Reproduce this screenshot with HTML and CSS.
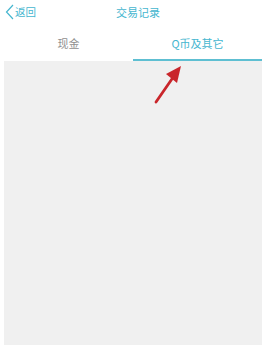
FILE: index.html
```html
<!DOCTYPE html>
<html>
<head>
<meta charset="utf-8">
<link rel="stylesheet" href="styles.css">
</head>
<body>
<div class="page">
  <header class="topbar">
    <a class="back">
      <svg class="chev" width="9" height="16" viewBox="0 0 9 16"><path d="M8 1 L1.5 8 L8 15" fill="none" stroke="#45b6cf" stroke-width="1.2"/></svg>
      <span>返回</span>
    </a>
    <div class="title">交易记录</div>
  </header>
  <nav class="tabs">
    <div class="tab">现金</div>
    <div class="tab active">Q币及其它</div>
  </nav>
  <main class="content"></main>
  <svg class="arrow" width="40" height="44" viewBox="0 0 40 44">
    <path d="M6 40 L24 14" stroke="#c9262b" stroke-width="2.8" stroke-linecap="round" fill="none"/>
    <path d="M31 4 L16 12 L27 21 Z" fill="#c9262b"/>
  </svg>
</div>
</body>
</html>
```
FILE: styles.css
```css
html, body {
  margin: 0;
  padding: 0;
  background: #ffffff;
}
.page {
  position: relative;
  width: 266px;
  height: 346px;
  display: flex;
  flex-direction: column;
  font-family: "Noto Sans CJK SC", "Noto Sans", sans-serif;
  overflow: hidden;
}
.topbar {
  position: relative;
  height: 26px;
  display: flex;
  align-items: center;
  justify-content: center;
}
.back {
  position: absolute;
  left: 5px;
  top: 4px;
  display: flex;
  align-items: center;
  gap: 1px;
  color: #45b6cf;
  font-size: 10.5px;
  line-height: 16px;
}
.title {
  color: #45b6cf;
  font-size: 11px;
  line-height: 14px;
  margin-top: -2px;
  margin-left: 10px;
}
.tabs {
  display: flex;
  height: 35px;
  padding: 0 4px;
}
.tab {
  flex: 1;
  display: flex;
  align-items: center;
  justify-content: center;
  font-size: 11px;
  color: #909090;
  box-sizing: border-box;
  padding-bottom: 2px;
}
.tab.active {
  color: #45b6cf;
  border-bottom: 2px solid #5ebfd2;
  padding-bottom: 0;
}
.content {
  flex: 1;
  margin: 0 4px 1px 4px;
  background: #f0f0f0;
}
.arrow {
  position: absolute;
  left: 150px;
  top: 62px;
}
```
